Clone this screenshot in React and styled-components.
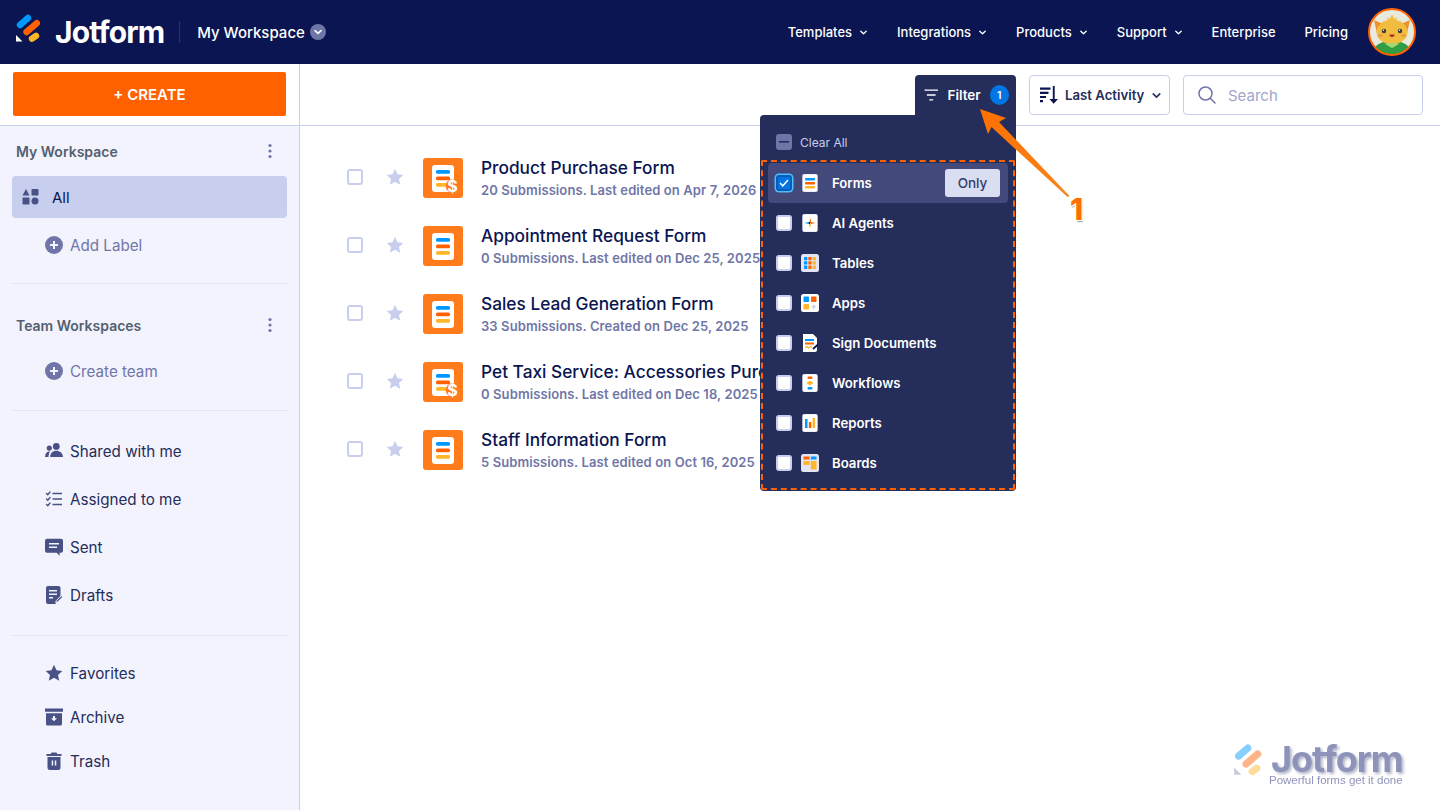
import React from "react";
import styled, { createGlobalStyle } from "styled-components";

const GlobalStyle = createGlobalStyle`
  html, body {
    margin: 0;
    height: 100%;
    overflow: hidden;
    background: #fff;
    font-family: Inter, "Liberation Sans", sans-serif;
  }
  * { box-sizing: border-box; }
`;

const Page = styled.div`
  position: relative;
  width: 1440px;
  height: 810px;
  display: flex;
  flex-direction: column;
  overflow: hidden;
`;

const Header = styled.header`
  height: 64px;
  flex: none;
  background: #0a1551;
  display: flex;
  align-items: center;
  padding: 0 24px 0 15px;
  color: #fff;
`;

const Brand = styled.div`
  display: flex;
  align-items: center;
  gap: 10px;
  font-size: 30px;
  font-weight: 700;
  letter-spacing: -0.9px;
`;

const WorkspaceSwitch = styled.div`
  display: flex;
  align-items: center;
  gap: 5px;
  margin-left: 15px;
  padding-left: 17px;
  border-left: 1px solid #2a3268;
  height: 22px;
  font-size: 15px;
  font-weight: 500;
`;

const RoundChevron = styled.span`
  width: 16px;
  height: 16px;
  border-radius: 50%;
  background: #6f76a7;
  display: flex;
  align-items: center;
  justify-content: center;
`;

const Nav = styled.nav`
  margin-left: auto;
  display: flex;
  align-items: center;
  gap: 29px;
  font-size: 13px;
  font-weight: 500;
`;

const NavItem = styled.span`
  display: flex;
  align-items: center;
  gap: 7px;
`;

const Avatar = styled.div`
  width: 48px;
  height: 48px;
  margin-left: 20px;
`;

const Body = styled.div`
  flex: 1;
  display: flex;
  min-height: 0;
`;

const Sidebar = styled.aside`
  width: 300px;
  flex: none;
  background: #f3f3fe;
  border-right: 1px solid #c8ceed;
  display: flex;
  flex-direction: column;
`;

const CreateZone = styled.div`
  height: 62px;
  background: #fff;
  border-bottom: 1px solid #c8ceed;
  padding: 8px 13px 9px;
`;

const CreateButton = styled.button`
  width: 273px;
  height: 44px;
  border: 0;
  border-radius: 2px;
  background: #ff6100;
  color: #fff;
  font: 600 15px Inter, sans-serif;
`;

const Group = styled.div`
  padding: ${(p) => p.$pad};
`;

const Divider = styled.div`
  height: 1px;
  margin: 0 12px;
  background: #e3e5f5;
`;

const SectionHeader = styled.div`
  height: 50px;
  padding: 0 27px 0 16px;
  display: flex;
  align-items: center;
  justify-content: space-between;
  color: #545f6f;
  font-size: 14px;
  font-weight: 600;
`;

const ActiveRow = styled.div`
  height: 42px;
  margin: 0 12px 3px;
  padding-left: 10px;
  border-radius: 4px;
  background: #c8ceed;
  display: flex;
  align-items: center;
  gap: 13px;
  color: #0a1551;
  font-size: 15px;
`;

const SideRow = styled.div`
  height: ${(p) => p.$height}px;
  padding-left: 45px;
  display: flex;
  align-items: center;
  gap: 7px;
  color: ${(p) => (p.$muted ? "#6f76a7" : "#252d5b")};
  font-size: 15.2px;
`;

const Main = styled.main`
  flex: 1;
  min-width: 0;
  display: flex;
  flex-direction: column;
`;

const Toolbar = styled.div`
  height: 62px;
  flex: none;
  border-bottom: 1px solid #c8ceed;
  padding: 11px 17px 0 0;
  display: flex;
  justify-content: flex-end;
  gap: 13px;
`;

const FilterWrap = styled.div`
  position: relative;
  width: 101px;
  height: 40px;
`;

const FilterTab = styled.div`
  height: 42px;
  border-radius: 4px 4px 0 0;
  background: #252d5b;
  color: #fff;
  display: flex;
  align-items: center;
  padding: 0 7px 2px 9px;
  font-size: 13.5px;
  font-weight: 600;
  gap: 9px;
`;

const CountBadge = styled.span`
  width: 20px;
  height: 20px;
  margin-left: auto;
  border-radius: 50%;
  background: #0075e3;
  font-size: 10.5px;
  display: flex;
  align-items: center;
  justify-content: center;
`;

const FilterPanel = styled.div`
  position: absolute;
  z-index: 2;
  top: 40px;
  right: 0;
  width: 256px;
  height: 376px;
  border-radius: 4px 0 4px 4px;
  background: #252d5b;
  padding: 0 1px;
`;

const ClearRow = styled.div`
  height: 45px;
  padding: 9px 0 0 15px;
  display: flex;
  align-items: center;
  gap: 8px;
  color: #c8ceed;
  font-size: 12px;
`;

const Options = styled.div`
  height: 330px;
  border: 2px dashed #ff6100;
  border-radius: 2px;
  padding: 1px 5px;
`;

const OptionRow = styled.div`
  height: 40px;
  border-radius: 4px;
  padding: 0 8px;
  background: ${(p) => (p.$active ? "#434a7b" : "transparent")};
  display: flex;
  align-items: center;
  color: #fff;
  font-size: 13.2px;
  font-weight: 600;
`;

const OptionIcon = styled.span`
  width: 18px;
  height: 18px;
  margin: 0 13px 0 9px;
  display: flex;
`;

const OnlyButton = styled.span`
  margin-left: auto;
  width: 55px;
  height: 28px;
  border-radius: 3px;
  background: #dadef3;
  color: #343c6a;
  font-size: 13.5px;
  font-weight: 500;
  display: flex;
  align-items: center;
  justify-content: center;
`;

const Check = styled.span`
  width: 16px;
  height: 16px;
  flex: none;
  border-radius: 3px;
  display: flex;
  align-items: center;
  justify-content: center;
  background: ${(p) => (p.$checked ? "#0075e3" : p.$mixed ? "#6f76a7" : "#fff")};
  border: 2px solid ${(p) => (p.$checked ? "#0a5bb5" : p.$mixed ? "#6f76a7" : "#c8ceed")};
  box-shadow: ${(p) => (p.$checked ? "0 0 0 1.5px #4dbefc" : "none")};
`;

const SortButton = styled.div`
  width: 141px;
  height: 40px;
  border: 1px solid #c8ceed;
  border-radius: 4px;
  display: flex;
  align-items: center;
  padding-left: 10px;
  gap: 7px;
  color: #252d5b;
  font-size: 13.2px;
  font-weight: 600;
`;

const SearchBox = styled.div`
  width: 240px;
  height: 40px;
  border: 1px solid #c8ceed;
  border-radius: 4px;
  display: flex;
  align-items: center;
  padding-left: 14px;
  gap: 12px;
  color: #a0a6cc;
  font-size: 15px;
`;

const FormList = styled.div`
  padding: 17px 0 0 47px;
`;

const FormRow = styled.div`
  height: 68px;
  display: flex;
  align-items: center;
`;

const RowCheck = styled.span`
  width: 16px;
  height: 16px;
  border: 2px solid #c8ceed;
  border-radius: 3px;
  background: #fff;
`;

const RowStar = styled.span`
  display: flex;
  margin: 0 19px 0 23px;
`;

const FormTile = styled.span`
  width: 40px;
  height: 40px;
  flex: none;
  display: flex;
  margin: 2px 18px 0 0;
`;

const FormText = styled.div`
  white-space: nowrap;
  margin-top: -1px;
`;

const FormTitle = styled.div`
  color: #0a1551;
  font-size: 17.3px;
  font-weight: 500;
  line-height: 24px;
`;

const FormMeta = styled.div`
  margin-top: 2px;
  color: #6f76a7;
  font-size: 13px;
  font-weight: 600;
  letter-spacing: 0.1px;
  line-height: 16px;
`;

const ArrowOverlay = styled.svg`
  position: absolute;
  z-index: 3;
  left: 970px;
  top: 100px;
`;

const StepNumber = styled.span`
  position: absolute;
  z-index: 3;
  left: 1070px;
  top: 191px;
  color: #ff6f00;
  font-size: 30px;
  font-weight: 800;
  text-shadow: 1px 1px 0 #fff, -1px 1px 0 #fff, 1px -1px 0 #fff, -1px -1px 0 #fff, 1px 2px 1px #999;
`;

const Watermark = styled.div`
  position: absolute;
  right: 37px;
  bottom: 22px;
  width: 170px;
  height: 44px;
  opacity: 0.78;
  filter: blur(0.5px);
`;

const WatermarkName = styled.span`
  position: absolute;
  left: 38px;
  top: 0;
  color: #6f76a7;
  font-size: 36px;
  font-weight: 700;
  letter-spacing: -1px;
  line-height: 30px;
  text-shadow: 2px 2px 3px #9a9fb8;
`;

const WatermarkTag = styled.span`
  position: absolute;
  left: 36px;
  top: 30px;
  color: #6f76a7;
  font: 11.5px/13px "Liberation Sans", sans-serif;
  white-space: nowrap;
`;

const WatermarkLogo = styled.span`
  position: absolute;
  left: 0;
  top: 3px;
  opacity: 0.6;
`;

const Chevron = ({ color = "#fff", size = 10 }) => (
  <svg width={size} height={size} viewBox="0 0 10 10" fill="none">
    <path d="M2 3.6 5 6.4 8 3.6" stroke={color} strokeWidth="1.5" strokeLinecap="round" strokeLinejoin="round" />
  </svg>
);

const Dots = () => (
  <svg width="4" height="16" viewBox="0 0 4 16" fill="#6f76a7">
    <circle cx="2" cy="2.5" r="1.6" />
    <circle cx="2" cy="8" r="1.6" />
    <circle cx="2" cy="13.5" r="1.6" />
  </svg>
);

const JotLogo = ({ size = 30, white = "#fff" }) => (
  <svg width={size} height={size} viewBox="15 17 30 30" overflow="visible" fill="none" strokeLinecap="round" strokeWidth="6.4">
    <line x1="20" y1="25" x2="28" y2="18" stroke="#0099ff" />
    <line x1="26.500" y1="32" x2="36.800" y2="23.200" stroke="#ff6100" />
    <line x1="32" y1="38.600" x2="36" y2="35.800" stroke="#ffb629" />
    <path d="M16 35 22.500 41.500H16Z" fill={white} />
  </svg>
);

const SideIcon = ({ d, extra }) => (
  <svg width="18" height="18" viewBox="0 0 18 18" fill="#485286">
    <path d={d} />
    {extra}
  </svg>
);

const STAR = "M9 .8l2.5 5.4 5.8.7-4.3 4 1.2 5.8L9 13.8l-5.2 2.9L5 10.9.7 6.9l5.8-.7z";

const icons = {
  people: (
    <SideIcon
      d="M11.3 1a3.4 3.4 0 1 1 0 6.8 3.4 3.4 0 0 1 0-6.8zM4.3 3.5a2.6 2.6 0 1 1 0 5.200 2.6 2.6 0 0 1 0-5.200zM11.300 8.700c3.400 0 6.500 2.100 6.700 6.300H5.200c.1-4.200 2.700-6.300 6.100-6.300zM4.200 9.500c.3 0 .7 0 1 .1-1 1.200-1.600 3-1.700 5.400H0c.2-3.600 1.800-5.500 4.200-5.500z"
    />
  ),
  tasks: (
    <svg width="18" height="18" viewBox="0 0 18 18" fill="none" stroke="#485286" strokeWidth="1.4">
      <path d="M7.500 3.500H17M7.500 9H17M7.500 14.500H17" />
      <path d="M1.500 3.500l1.300 1.300L5 2M1.500 9l1.300 1.300L5 7.500M1.500 14.500l1.300 1.300L5 13" strokeLinecap="round" />
    </svg>
  ),
  sent: (
    <SideIcon
      d="M2 .8h14a2 2 0 0 1 2 2v10a2 2 0 0 1-2 2h-1.400v3l-3-3H2a2 2 0 0 1-2-2v-10a2 2 0 0 1 2-2z"
      extra={<path d="M4 5h10v1.500H4zM4 8.500h8V10H4z" fill="#f3f3fe" />}
    />
  ),
  drafts: (
    <SideIcon
      d="M3 0h10.500a2 2 0 0 1 2 2v7.500l-5 8.500H3a2 2 0 0 1-2-2V2a2 2 0 0 1 2-2z"
      extra={
        <>
          <path d="M4 4h8v1.500H4zM4 7.500h8V9H4zM4 11h4v1.500H4z" fill="#f3f3fe" />
          <path d="M16.300 9.600l1.400 1.400-5 5-2 .6.600-2z" stroke="#f3f3fe" strokeWidth="1" />
        </>
      }
    />
  ),
  star: <SideIcon d={STAR} />,
  archive: (
    <SideIcon
      d="M0 .5h18v3.300H0zM1 5.300h16V16a1.500 1.500 0 0 1-1.500 1.500h-13A1.500 1.500 0 0 1 1 16z"
      extra={<path d="M8 8h2v2.200h2L9 13.200 6 10.200h2z" fill="#f3f3fe" />}
    />
  ),
  trash: (
    <SideIcon
      d="M6.500.5h5L12.300 2H16.500v2h-15V2h4.200zM2.500 5h13v10.500a2.500 2.500 0 0 1-2.500 2.500H5a2.500 2.500 0 0 1-2.500-2.500z"
      extra={<path d="M6.700 8.500h1.500v5H6.700zM9.800 8.500h1.500v5H9.800z" fill="#f3f3fe" />}
    />
  ),
};

const PlusBadge = () => (
  <svg width="18" height="18" viewBox="0 0 18 18">
    <circle cx="9" cy="9" r="9" fill="#6f76a7" />
    <path d="M9 5v8M5 9h8" stroke="#f3f3fe" strokeWidth="2" />
  </svg>
);

const Paper = ({ children }) => (
  <svg width="18" height="18" viewBox="0 0 18 18">
    <rect x="1.500" y="0" width="15" height="18" rx="2" fill="#fff" stroke="#c8ceed" strokeWidth=".6" />
    {children}
  </svg>
);

const productIcons = {
  forms: (
    <Paper>
      <rect x="4" y="4" width="10" height="2.500" rx=".8" fill="#0099ff" />
      <rect x="4" y="8" width="10" height="2.500" rx=".8" fill="#ff6100" />
      <rect x="4" y="12" width="10" height="2.500" rx=".8" fill="#ffb629" />
    </Paper>
  ),
  agents: (
    <Paper>
      <path d="M9 3.500 10 8 9 9H8z" fill="#ffb629" />
      <path d="M9 3.500 10 8l.5 1H9z" fill="#ff6100" />
      <path d="M3.500 9 8 8l1 1-1 1z" fill="#0099ff" />
      <path d="M14.500 9 10 8 9 9l1 1z" fill="#ff6100" />
      <path d="M9 14.500 10 10 9 9 8 10z" fill="#ffb629" />
      <path d="M8 8h1v2H8z" fill="#0a1551" />
    </Paper>
  ),
  tables: (
    <svg width="18" height="18" viewBox="0 0 18 18">
      <rect width="18" height="18" rx="2.500" fill="#e3e5f5" />
      {[0, 1, 2].flatMap((r) =>
        [0, 1, 2].map((c) => (
          <rect
            key={`${r}${c}`}
            x={3 + c * 4.3}
            y={3 + r * 4.3}
            width="3.300"
            height="3.300"
            rx=".5"
            fill={["#0099ff", "#ff6100", "#ffb629"][c]}
          />
        ))
      )}
    </svg>
  ),
  apps: (
    <svg width="18" height="18" viewBox="0 0 18 18">
      <rect width="18" height="18" rx="2.500" fill="#fff" />
      <rect x="2.500" y="2.500" width="5.500" height="5.500" rx=".8" fill="#0099ff" />
      <rect x="10" y="2.500" width="5.500" height="5.500" rx=".8" fill="#ff6100" />
      <rect x="2.500" y="10" width="5.500" height="5.500" rx=".8" fill="#ffb629" />
      <path d="M12.700 10.500v4.500M10.500 12.700H15" stroke="#c8ceed" strokeWidth="1.200" />
    </svg>
  ),
  sign: (
    <svg width="18" height="18" viewBox="0 0 18 18">
      <path d="M2 0h10l4 4v12a2 2 0 0 1-2 2H2z" fill="#fff" />
      <rect x="4" y="5" width="9" height="2" fill="#0099ff" />
      <rect x="4" y="8.500" width="9" height="2" fill="#ff6100" />
      <path d="M4 14l2-1.500 1.500 1.500 2-1.500 1.500 1" stroke="#ffb629" strokeWidth="1.200" fill="none" />
      <path d="M12 15l5-4.500" stroke="#0a1551" strokeWidth="1.800" />
    </svg>
  ),
  workflows: (
    <Paper>
      <rect x="6.500" y="2.500" width="5" height="2.500" rx="1" fill="#ff6100" />
      <path d="M9 6.500l3.500 2.500L9 11.500 5.500 9z" fill="#ffb629" />
      <rect x="6.500" y="13" width="5" height="2.500" rx="1" fill="#0099ff" />
    </Paper>
  ),
  reports: (
    <Paper>
      <rect x="4" y="5" width="2.500" height="9" fill="#0099ff" />
      <rect x="7.800" y="8" width="2.500" height="6" fill="#ff6100" />
      <rect x="11.600" y="4" width="2.500" height="10" fill="#ffb629" />
    </Paper>
  ),
  boards: (
    <svg width="18" height="18" viewBox="0 0 18 18">
      <rect width="18" height="18" rx="2.500" fill="#e3e5f5" />
      <rect x="2.500" y="2.500" width="6" height="3" fill="#ff6100" />
      <rect x="9.800" y="2.500" width="5.700" height="3" fill="#0099ff" />
      <rect x="2.500" y="7" width="6" height="4" fill="#ffb629" />
      <rect x="9.800" y="7" width="5.700" height="8.500" rx=".6" fill="#ffb629" />
    </svg>
  ),
};

const FormGlyph = ({ paid }) => (
  <svg width="40" height="40" viewBox="0 0 40 40">
    <rect width="40" height="40" rx="3" fill="#ff7b1c" />
    <rect x="9" y="7" width="22" height="27" rx="3" fill="#fff" />
    <rect x="13" y="12" width="14" height="3.800" rx="1.500" fill="#0099ff" />
    <rect x="13" y="18.500" width="14" height="3.800" rx="1.500" fill="#ff6100" />
    <rect x="13" y="25" width="14" height="3.800" rx="1.500" fill="#ffb629" />
    {paid && (
      <>
        <circle cx="29.500" cy="28" r="6.800" fill="#ff7b1c" />
        <text x="29.500" y="33.600" textAnchor="middle" fill="#fff" fontSize="16" fontWeight="700" fontFamily="Inter, sans-serif">
          $
        </text>
      </>
    )}
  </svg>
);

const forms = [
  { title: "Product Purchase Form", meta: "20 Submissions. Last edited on Apr 7, 2026", paid: true },
  { title: "Appointment Request Form", meta: "0 Submissions. Last edited on Dec 25, 2025" },
  { title: "Sales Lead Generation Form", meta: "33 Submissions. Created on Dec 25, 2025" },
  { title: "Pet Taxi Service: Accessories Purchase Form", meta: "0 Submissions. Last edited on Dec 18, 2025", paid: true },
  { title: "Staff Information Form", meta: "5 Submissions. Last edited on Oct 16, 2025" },
];

const options = [
  ["forms", "Forms"],
  ["agents", "AI Agents"],
  ["tables", "Tables"],
  ["apps", "Apps"],
  ["sign", "Sign Documents"],
  ["workflows", "Workflows"],
  ["reports", "Reports"],
  ["boards", "Boards"],
];

const CatAvatar = () => (
  <svg width="48" height="48" viewBox="0 0 48 48">
    <clipPath id="avatar-clip">
      <circle cx="24" cy="24" r="23" />
    </clipPath>
    <circle cx="24" cy="24" r="23" fill="#e9eade" />
    <g clipPath="url(#avatar-clip)">
      <path d="M4 48c0-10 8-15 20-15s20 5 20 15z" fill="#2f9e44" />
      <path d="M6 12l9 4-6 9zM42 12l-9 4 6 9z" fill="#f0902a" />
      <path d="M24 6l2 5 3-2-1 4h-8l-1-4 3 2z" fill="#f2bc3e" />
      <ellipse cx="24" cy="24" rx="15.500" ry="12.500" fill="#f2bc3e" />
      <path d="M17 36l7 4 7-4-3-1h-8z" fill="#a5d86e" />
    </g>
    <circle cx="16" cy="23" r="2.200" fill="#3a3a3a" />
    <circle cx="32" cy="23" r="2.200" fill="#3a3a3a" />
    <circle cx="15.500" cy="22.300" r=".7" fill="#fff" />
    <circle cx="31.500" cy="22.300" r=".7" fill="#fff" />
    <ellipse cx="12.500" cy="27.500" rx="2.500" ry="1.500" fill="#f09a4a" />
    <ellipse cx="35.500" cy="27.500" rx="2.500" ry="1.500" fill="#f09a4a" />
    <path d="M21.500 26.500h5c0 1.800-1 2.600-2.500 2.600s-2.500-.8-2.500-2.600z" fill="#a8321a" />
    <circle cx="24" cy="24" r="23" fill="none" stroke="#ff6100" strokeWidth="2" />
  </svg>
);

const App = () => (
  <Page>
    <GlobalStyle />
    <Header>
      <Brand>
        <JotLogo />
        Jotform
      </Brand>
      <WorkspaceSwitch>
        My Workspace
        <RoundChevron>
          <Chevron size={10} />
        </RoundChevron>
      </WorkspaceSwitch>
      <Nav>
        {["Templates", "Integrations", "Products", "Support"].map((item) => (
          <NavItem key={item}>
            {item}
            <Chevron size={9} />
          </NavItem>
        ))}
        <NavItem>Enterprise</NavItem>
        <NavItem>Pricing</NavItem>
      </Nav>
      <Avatar>
        <CatAvatar />
      </Avatar>
    </Header>
    <Body>
      <Sidebar>
        <CreateZone>
          <CreateButton>+ CREATE</CreateButton>
        </CreateZone>
        <Group $pad="0 0 14px">
          <SectionHeader>
            My Workspace
            <Dots />
          </SectionHeader>
          <ActiveRow>
            <svg width="17" height="16" viewBox="0 0 17 16" fill="#485286">
              <path d="M4 0l3.500 6.500H.5z" />
              <rect x="9.500" y="0" width="7" height="6.500" rx="1" />
              <rect x="0.500" y="8.500" width="7" height="7" rx="1" />
              <circle cx="13" cy="12" r="3.500" />
            </svg>
            All
          </ActiveRow>
          <SideRow $height={48} $muted>
            <PlusBadge />
            Add Label
          </SideRow>
        </Group>
        <Divider />
        <Group $pad="16px 0 18px">
          <SectionHeader>
            Team Workspaces
            <Dots />
          </SectionHeader>
          <SideRow $height={42} $muted>
            <PlusBadge />
            Create team
          </SideRow>
        </Group>
        <Divider />
        <Group $pad="16px 0">
          <SideRow $height={48}>{icons.people}Shared with me</SideRow>
          <SideRow $height={48}>{icons.tasks}Assigned to me</SideRow>
          <SideRow $height={48}>{icons.sent}Sent</SideRow>
          <SideRow $height={48}>{icons.drafts}Drafts</SideRow>
        </Group>
        <Divider />
        <Group $pad="15px 0 0">
          <SideRow $height={44}>{icons.star}Favorites</SideRow>
          <SideRow $height={44}>{icons.archive}Archive</SideRow>
          <SideRow $height={44}>{icons.trash}Trash</SideRow>
        </Group>
      </Sidebar>
      <Main>
        <Toolbar>
          <FilterWrap>
            <FilterTab>
              <svg width="15" height="12" viewBox="0 0 15 12" stroke="#fff" strokeWidth="1.300">
                <path d="M0.500 1h14M3 6h9M5.500 11h4" />
              </svg>
              Filter
              <CountBadge>1</CountBadge>
            </FilterTab>
            <FilterPanel>
              <ClearRow>
                <Check $mixed>
                  <svg width="10" height="2" viewBox="0 0 10 2">
                    <rect width="10" height="1.600" fill="#252d5b" />
                  </svg>
                </Check>
                Clear All
              </ClearRow>
              <Options>
                {options.map(([key, label], i) => (
                  <OptionRow key={key} $active={i === 0}>
                    <Check $checked={i === 0}>
                      {i === 0 && (
                        <svg width="10" height="8" viewBox="0 0 10 8" fill="none" stroke="#fff" strokeWidth="1.500">
                          <path d="M1 4l2.800 2.800L9 1" />
                        </svg>
                      )}
                    </Check>
                    <OptionIcon>{productIcons[key]}</OptionIcon>
                    {label}
                    {i === 0 && <OnlyButton>Only</OnlyButton>}
                  </OptionRow>
                ))}
              </Options>
            </FilterPanel>
          </FilterWrap>
          <SortButton>
            <svg width="18" height="18" viewBox="0 0 18 18" fill="#0a1551">
              <path d="M0 1.500h10.500v2.200H0zM0 5.700h8.500v2.200H0zM0 9.900h6v2.200H0zM0 14.100h3v2.200H0z" />
              <path d="M12.800 0h1.900v13H18l-4.300 4.800L9.400 13h3.400z" />
            </svg>
            Last Activity
            <Chevron color="#252d5b" size={11} />
          </SortButton>
          <SearchBox>
            <svg width="18" height="18" viewBox="0 0 18 18" fill="none" stroke="#6f76a7" strokeWidth="1.500">
              <circle cx="7.500" cy="7.500" r="6.500" />
              <path d="M12.300 12.300 17 17" strokeLinecap="round" />
            </svg>
            Search
          </SearchBox>
        </Toolbar>
        <FormList>
          {forms.map((form) => (
            <FormRow key={form.title}>
              <RowCheck />
              <RowStar>
                <svg width="18" height="18" viewBox="0 0 18 18" fill="#c8ceed">
                  <path d={STAR} />
                </svg>
              </RowStar>
              <FormTile>
                <FormGlyph paid={form.paid} />
              </FormTile>
              <FormText>
                <FormTitle>{form.title}</FormTitle>
                <FormMeta>{form.meta}</FormMeta>
              </FormText>
            </FormRow>
          ))}
        </FormList>
      </Main>
    </Body>

    <ArrowOverlay width="110" height="110" viewBox="970 100 110 110">
      <defs>
        <linearGradient id="arrow-fill" x1="0" y1="0" x2="1" y2="1">
          <stop offset="0" stopColor="#ff6f00" />
          <stop offset="1" stopColor="#f5861f" />
        </linearGradient>
      </defs>
      <path d="M980 109 1006 118 999 122 1069.500 196 1067.500 197 991.500 127 988 134Z" fill="url(#arrow-fill)" />
    </ArrowOverlay>
    <StepNumber>1</StepNumber>

    <Watermark>
      <WatermarkLogo>
        <JotLogo size={34} white="#8a90b8" />
      </WatermarkLogo>
      <WatermarkName>Jotform</WatermarkName>
      <WatermarkTag>Powerful forms get it done</WatermarkTag>
    </Watermark>
  </Page>
);

export default App;
